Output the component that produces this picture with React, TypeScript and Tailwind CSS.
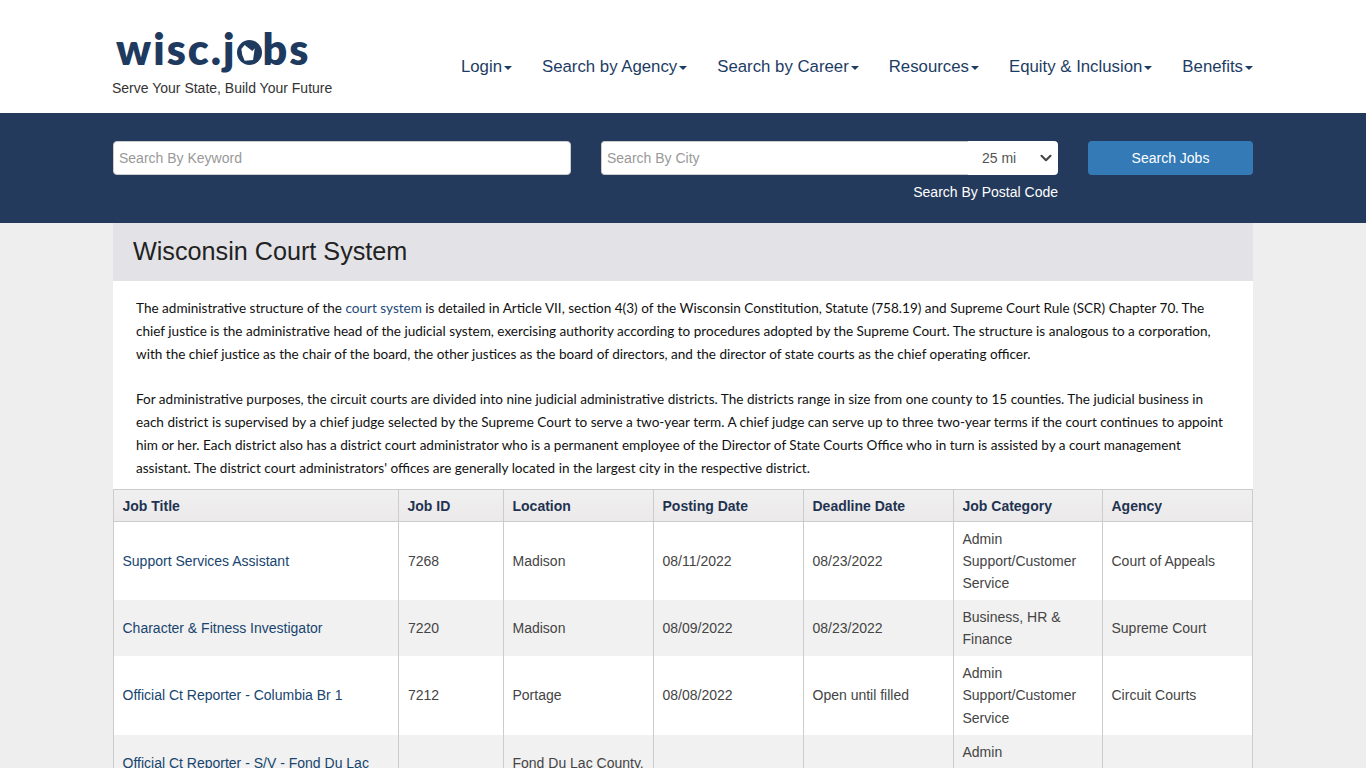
import { ChevronDown } from "lucide-react";

const navItems = ["Login", "Search by Agency", "Search by Career", "Resources", "Equity & Inclusion", "Benefits"];

const jobs = [
  { title: ["Support Services Assistant"], id: "7268", location: ["Madison"], posted: "08/11/2022", deadline: "08/23/2022", category: ["Admin", "Support/Customer", "Service"], agency: "Court of Appeals", rowClass: "bg-white h-[78px]" },
  { title: ["Character & Fitness Investigator"], id: "7220", location: ["Madison"], posted: "08/09/2022", deadline: "08/23/2022", category: ["Business, HR &", "Finance"], agency: "Supreme Court", rowClass: "bg-[#f1f1f1] h-[56px]" },
  { title: ["Official Ct Reporter - Columbia Br 1"], id: "7212", location: ["Portage"], posted: "08/08/2022", deadline: "Open until filled", category: ["Admin", "Support/Customer", "Service"], agency: "Circuit Courts", rowClass: "bg-white h-[79px]" },
  { title: ["Official Ct Reporter - S/V - Fond Du Lac", "Co"], id: "", location: ["Fond Du Lac County,", "WI"], posted: "", deadline: "", category: ["Admin", "Support/Customer", "Service"], agency: "", rowClass: "bg-[#f1f1f1] h-[78px]" },
];

const headers = [
  { label: "Job Title", width: "w-[285px]" },
  { label: "Job ID", width: "w-[105px]" },
  { label: "Location", width: "w-[150px]" },
  { label: "Posting Date", width: "w-[150px]" },
  { label: "Deadline Date", width: "w-[150px]" },
  { label: "Job Category", width: "w-[149px]" },
  { label: "Agency", width: "w-[150px]" },
];

const Logo = () => (
  <div className="flex items-start h-[58px] text-[#1f3a5f] font-['Lato',sans-serif] font-extrabold text-[43px] leading-[50px] tracking-[2px] pl-[3px]">
    <span>wisc.j</span>
    <svg viewBox="0 0 26 26" className="w-[25px] h-[25px] mt-[16px] shrink-0">
      <circle cx="13" cy="13" r="13" fill="#1f3a5f" />
      <path d="M4.500 9.400 8 5.200l3.500 2.800 4.500 3.500 2.400-2.800-.7 5.200-1 6.900-8.700.7-2.500-5.900z" fill="#fff" />
    </svg>
    <span className="ml-[1px]">bs</span>
  </div>
);

export default function App() {
  return (
    <div className="h-[768px] overflow-hidden bg-[#eeeeee] font-['Liberation_Sans',Arial,sans-serif]">
      {/* Header */}
      <header className="bg-white h-[113px]">
        <div className="w-[1140px] mx-auto flex justify-between h-full">
          <div className="pt-[24px]">
            <Logo />
            <div className="-ml-[1px] text-[14px] leading-[20px] text-[#333333] mt-[-4px]">Serve Your State, Build Your Future</div>
          </div>
          <nav className="flex items-center gap-[30px] pt-[20px]">
            {navItems.map((item) => (
              <a key={item} href="#" className="flex items-center text-[16.8px] text-[#1d3c63]">
                {item}
                <span className="ml-[2px] mt-[2px] w-0 h-0 border-x-[4px] border-x-transparent border-t-[4px] border-t-[#1d3c63]" />
              </a>
            ))}
          </nav>
        </div>
      </header>

      {/* Search */}
      <section className="bg-[#243a5c] h-[110px]">
        <div className="w-[1140px] mx-auto flex pt-[28px]">
          <input
            placeholder="Search By Keyword"
            className="w-[458px] h-[34px] px-[5px] bg-white rounded-[4px] border border-[#cccccc] text-[14px] placeholder:text-[#999999]"
          />
          <div className="ml-[30px] w-[457px]">
            <div className="flex h-[34px]">
              <input
                placeholder="Search By City"
                className="flex-1 min-w-0 px-[5px] bg-white rounded-l-[4px] border border-[#cccccc] border-r-0 text-[14px] placeholder:text-[#999999]"
              />
              <div className="relative w-[90px] h-full bg-white rounded-r-[4px] text-[14px] text-[#555555]">
                <span className="absolute left-[14px] top-[7px]">25 mi</span>
                <ChevronDown className="absolute right-[3px] top-[7.5px] w-[18px] h-[18px] text-[#444444]" strokeWidth={2.8} />
              </div>
            </div>
            <div className="text-right text-white text-[14px] leading-[20px] mt-[7px]">Search By Postal Code</div>
          </div>
          <button className="ml-[30px] w-[165px] h-[34px] bg-[#337ab7] rounded-[4px] text-white text-[14px]">Search Jobs</button>
        </div>
      </section>

      <main className="w-[1140px] mx-auto">
        <h1 className="bg-[#e3e3e7] h-[58px] flex items-center pl-[20px] text-[25.2px] text-[#222222]">Wisconsin Court System</h1>

        {/* Description */}
        <div className="bg-white h-[208px] pt-[15.8px] pl-[23px] font-['Lato',sans-serif] text-[13.55px] leading-[22.86px] text-[#111111] whitespace-nowrap">
          The administrative structure of the <a href="#" className="text-[#1d4a78]">court system</a> is detailed in Article VII, section 4(3) of the Wisconsin Constitution, Statute (758.19) and Supreme Court Rule (SCR) Chapter 70. The
          <br />
          chief justice is the administrative head of the judicial system, exercising authority according to procedures adopted by the Supreme Court. The structure is analogous to a corporation,
          <br />
          with the chief justice as the chair of the board, the other justices as the board of directors, and the director of state courts as the chief operating officer.
          <br />
          <br />
          For administrative purposes, the circuit courts are divided into nine judicial administrative districts. The districts range in size from one county to 15 counties. The judicial business in
          <br />
          each district is supervised by a chief judge selected by the Supreme Court to serve a two-year term. A chief judge can serve up to three two-year terms if the court continues to appoint
          <br />
          him or her. Each district also has a district court administrator who is a permanent employee of the Director of State Courts Office who in turn is assisted by a court management
          <br />
          assistant. The district court administrators' offices are generally located in the largest city in the respective district.
        </div>

        {/* Jobs table */}
        <table className="w-[1140px] table-fixed border-collapse text-[14px] text-[#444444]">
          <thead>
            <tr className="h-[32px] bg-gradient-to-b from-[#f1f0f1] to-[#ebe9ea]">
              {headers.map((h) => (
                <th key={h.label} className={`${h.width} border border-[#cccccc] px-[8.5px] pt-[1px] text-left font-bold text-[#1f3350]`}>
                  {h.label}
                </th>
              ))}
            </tr>
          </thead>
          <tbody>
            {jobs.map((job) => (
              <tr key={job.title[0]} className={job.rowClass}>
                <td className="border-x border-[#cccccc] px-[8.5px] pt-[1px] leading-[22.3px]">
                  <a href="#" className="text-[#17456f] whitespace-nowrap">
                    {job.title.map((line) => (
                      <div key={line}>{line}</div>
                    ))}
                  </a>
                </td>
                <td className="border-x border-[#cccccc] px-[9px] pt-[1px]">{job.id}</td>
                <td className="border-x border-[#cccccc] px-[8.5px] pt-[1px] leading-[22.3px] whitespace-nowrap">
                  {job.location.map((line) => (
                    <div key={line}>{line}</div>
                  ))}
                </td>
                <td className="border-x border-[#cccccc] px-[8.5px] pt-[1px]">{job.posted}</td>
                <td className="border-x border-[#cccccc] px-[8.5px] pt-[1px]">{job.deadline}</td>
                <td className="border-x border-[#cccccc] px-[8.5px] pt-[1px] leading-[22.3px]">
                  {job.category.map((line) => (
                    <div key={line}>{line}</div>
                  ))}
                </td>
                <td className="border-x border-[#cccccc] px-[8.5px] pt-[1px]">{job.agency}</td>
              </tr>
            ))}
          </tbody>
        </table>
      </main>
    </div>
  );
}
